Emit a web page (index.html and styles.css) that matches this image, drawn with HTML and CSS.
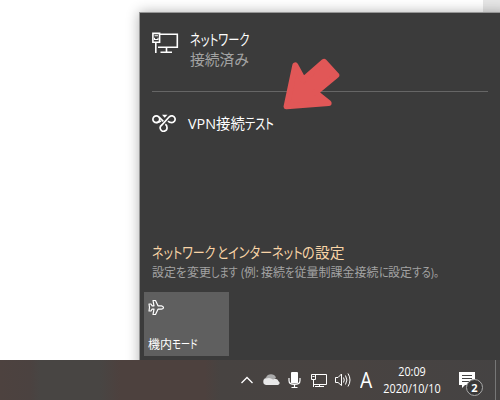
FILE: index.html
```html
<!DOCTYPE html>
<html lang="ja">
<head>
<meta charset="utf-8">
<title>ネットワーク</title>
<link rel="stylesheet" href="styles.css">
</head>
<body>
<main class="desktop">
  <div class="window-edge"></div>
  <section class="flyout">
    <div class="network">
      <svg class="network-icon" width="28" height="22" viewBox="0 0 28 22" fill="none" stroke="#fff" stroke-width="1.6">
        <path d="M8 2.200H25.300V15.300H6M14.500 15V20M8.500 20.300H20"/>
        <path d="M.900 1.400H7.600V10.300H.900ZM3.800 10V21"/>
        <path d="M2.500 3.800H6M2.500 5.800V7.500H6V5.800" stroke-width="1.100"/>
      </svg>
      <div class="network-text">
        <div><span class="run name-run">ネットワーク</span></div>
        <div class="status">接続済み</div>
      </div>
    </div>
    <div class="vpn">
      <svg class="vpn-icon" width="25" height="18" viewBox="0 0 25 18" fill="none" stroke="#fff" stroke-width="1.7">
        <circle cx="4.300" cy="5.200" r="3.400"/>
        <path d="M7 3L11.300 7.300M4.500 8.600Q7.300 8.600 9 7"/>
        <path d="M19.500 8.600A3.400 3.400 0 1 0 17.300 2.800L9.800 11A3.400 3.400 0 1 0 15 13.500Q15 11.300 13.300 10.300M19.800 8.600Q17.500 8.600 16 7.200"/>
        <path d="M10 .800H15.500L12.700 3.800Z" fill="#fff" stroke="none"/>
      </svg>
      <div class="vpn-name"><span class="run latin-run">VPN</span>接続<span class="run test-run">テスト</span></div>
    </div>
    <div class="settings">
      <div class="settings-link"><span class="run link-a">ネットワーク</span><span class="run link-b">と</span><span class="run link-c">インターネット</span><span class="run link-d">の</span>設定</div>
      <div class="settings-note">設定<span class="run note-a">を</span>変更<span class="run note-b">します</span><span class="run note-c">(例:</span>接続<span class="run note-d">を</span>従量制課金接続<span class="run note-d">に</span>設定<span class="run note-e">する)。</span></div>
    </div>
    <div class="tile">
      <svg width="18" height="18" viewBox="0 0 18 18" fill="none" stroke="#fff" stroke-width="1.200" stroke-linejoin="round">
        <path d="M5 1.500H7.500L10 6.800H13.500Q15.500 7.300 15.500 8.500Q15.500 9.700 13.500 10.200H10L7.500 15.500H5L6 10.200H4L3 12H1L1.500 8.500L1 5H3L4 6.800H6Z"/>
      </svg>
      <div class="tile-label">機内<span class="run mode-run">モード</span></div>
    </div>
    <svg class="arrow" width="64" height="54" viewBox="0 0 64 54">
      <path d="M12.300 7.500L3.600 48.300L45.600 45L32.500 34.500L53.300 17.200L41 3.800L20.200 22Z"/>
    </svg>
  </section>
</main>
<footer class="taskbar">
  <svg width="120" height="40" viewBox="0 0 120 40" class="tray">
    <g fill="none" stroke="#fff">
      <path d="M1.500 23L7 17.500L12.500 23" stroke-width="1.300"/>
      <path d="M75 14.500H86.500V24.500H74M79.500 24V26.500M75 26.500H84M71.500 14.500H75.500V19.500H71.500ZM73.500 20V27M72.500 16.500H74.500" stroke-width="1"/>
      <path d="M95.500 17.500H98L101.500 14V25.500L98 22.500H95.500ZM103.500 17.500Q105 20 103.500 22.500M105.500 15.500Q108.300 20 105.500 24.500M108 13.500Q112 20 108 26.500" stroke-width="1"/>
      <path d="M49 18V20.500Q49 24.500 54.500 24.500Q60 24.500 60 20.500V18M54.500 25V27M51.500 27.500H57.500" stroke-width="1.200"/>
    </g>
    <path d="M23.500 20A4 4 0 0 1 26 17.500A5.500 5.500 0 0 1 36 17.500L32 21L26 24Z" fill="#aaa"/>
    <path d="M26 25A3.300 3.300 0 0 1 26 18.500L29 18Q31 18.200 33 19.500A3.500 3.500 0 0 1 38.500 21.200A2 2 0 0 1 37.500 25Z" fill="#e8e8e8"/>
    <rect x="51" y="12" width="7" height="11.500" rx="1" fill="#fff"/>
  </svg>
  <span class="ime">A</span>
  <div class="clock"><div>20:09</div><div>2020/10/10</div></div>
  <div class="action">
    <svg width="18" height="18" viewBox="0 0 18 18"><path d="M1 0H17V13H7L4 16V13H1Z" fill="#fff"/><path d="M4 3.500H14M4 6.500H14M4 9.500H11" stroke="#444" stroke-width="1"/></svg>
    <span class="badge">2</span>
  </div>
  <div class="show-desktop"></div>
</footer>
</body>
</html>
```
FILE: styles.css
```css
* { box-sizing: border-box; }
body {
  margin: 0;
  width: 500px;
  height: 400px;
  overflow: hidden;
  background: #fff;
  color: #fff;
  font-family: "Open Sans", "Noto Sans CJK JP", sans-serif;
  font-feature-settings: "palt";
}
svg { display: block; flex: none; }

/* Condensed text runs, each with its own advance width */
.run {
  display: inline-block;
  white-space: nowrap;
  transform-origin: left center;
  transform: scaleX(.77);
}
.name-run { width: 63px; transform: scaleX(.76); }
.link-a { width: 65px; transform: scaleX(.81); }
.latin-run { width: 28px; transform: scaleX(1); }
.test-run { width: 30px; transform: scaleX(.78); }
.link-b { width: 11px; transform: scaleX(.85); }
.link-c { width: 74px; transform: scaleX(.82); }
.link-d { width: 13px; transform: scaleX(.88); }
.note-a { width: 11px; transform: scaleX(.95); }
.note-b { width: 30px; transform: scaleX(.83); }
.note-c { width: 20px; transform: scaleX(.95); }
.note-d { width: 9.500px; transform: scaleX(.83); }
.note-e { width: 30px; transform: scaleX(.87); }
.mode-run { width: 26px; transform: scaleX(.78); }

.desktop {
  position: relative;
  height: 360px;
  padding: 12px 0 0 139px;
  overflow: hidden;
}
.window-edge {
  position: absolute;
  right: 0;
  top: 0;
  width: 17px;
  height: 12px;
  background: #e6e6e6;
}
.flyout {
  position: relative;
  width: 370px;
  height: 360px;
  padding-left: 12px;
  background: #3b3b3b;
  border-top: 1px solid #969696;
  border-left: 1px solid #969696;
  box-shadow: 0 0 12px rgba(0, 0, 0, .3);
}
.network {
  display: flex;
  width: 336px;
  height: 79px;
  padding-top: 17px;
  border-bottom: 1px solid #666;
}
.network-icon { margin-top: 2px; }
.network-text { margin: -1px 0 0 10px; font-size: 14.800px; line-height: 20px; }
.status { color: #a3a3a3; }
.vpn {
  display: flex;
  align-items: center;
  height: 62px;
  font-size: 14.400px;
}
.vpn-name { margin: 0 0 2px 11px; white-space: nowrap; }
.settings { margin-top: 88px; white-space: nowrap; }
.settings-link { color: #f9d5a7; font-size: 14.800px; line-height: 20px; }
.settings-note { color: #a3a3a3; font-size: 12px; line-height: 20px; padding-top: 1px; }
.tile {
  display: flex;
  flex-direction: column;
  justify-content: space-between;
  width: 85px;
  height: 64px;
  margin: 9px 0 0 -8px;
  padding: 7px 4px 3px;
  background: #5f5f5f;
  font-size: 12px;
  line-height: 17px;
}
.arrow {
  position: absolute;
  left: 143px;
  top: 45px;
  fill: #e15757;
  stroke: #e15757;
  stroke-width: 6px;
  stroke-linejoin: round;
}
.taskbar {
  display: flex;
  height: 40px;
  padding-left: 240px;
  background: linear-gradient(90deg, #4d423f 0, #4b4240 30px, #484543 40px, #484543 100px, #4d413e 120px, #4d413e 205px, #474341 220px, #484341 350px, #454343 500px);
}
.tray { width: 120px; }
.ime {
  width: 18px;
  font-size: 21px;
  line-height: 40px;
  transform: scaleX(.92);
  transform-origin: left center;
}
.clock {
  width: 68px;
  padding-top: 3px;
  text-align: center;
  font-size: 12px;
  line-height: 17px;
  white-space: nowrap;
  transform: scaleX(.9);
}
.action { position: relative; width: 49px; padding: 12px 0 0 12px; }
.badge {
  position: absolute;
  left: 20px;
  top: 19px;
  width: 17px;
  height: 17px;
  border: 1px solid #aaa;
  border-radius: 50%;
  background: #393838;
  font-size: 11px;
  font-weight: 700;
  line-height: 15px;
  text-align: center;
}
.show-desktop { width: 1px; background: #777; }
```
